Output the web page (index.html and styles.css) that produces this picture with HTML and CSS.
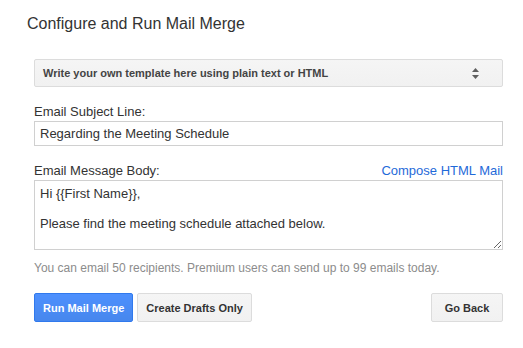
FILE: index.html
```html
<!DOCTYPE html>
<html lang="en">
<head>
  <meta charset="UTF-8">
  <title>Configure and Run Mail Merge</title>
  <link rel="stylesheet" href="styles.css">
</head>
<body>

  <h1 class="titulo">Configure and Run Mail Merge</h1>

  <div class="formulario">
    <div class="selector">
      <span>Write your own template here using plain text or HTML</span>
      <span class="flechas">
        <svg width="7" height="11" viewBox="0 0 7 11">
          <path d="M3.5 0 L7 4 L0 4 Z M0 7 L7 7 L3.5 11 Z" fill="#5f5f5f"/>
        </svg>
      </span>
    </div>

    <label class="etiqueta">Email Subject Line:</label>
    <input class="campo" type="text" value="Regarding the Meeting Schedule">

    <div class="etiqueta fila">
      <label>Email Message Body:</label>
      <a href="#" class="enlace">Compose HTML Mail</a>
    </div>
    <textarea class="cuerpo">Hi {{First Name}},

Please find the meeting schedule attached below.</textarea>

    <p class="nota">You can email 50 recipients. Premium users can send up to 99 emails today.</p>

    <div class="botones">
      <button class="azul">Run Mail Merge</button>
      <button>Create Drafts Only</button>
      <button class="volver">Go Back</button>
    </div>
  </div>

</body>
</html>
```

FILE: styles.css
```css
body {
  margin: 0;
  background: white;
  color: #333;
  font-family: 'Liberation Sans', Arial, sans-serif;
}

.titulo {
  margin: 0;
  padding: 14px 0 0 27px;
  font-size: 16px;
  line-height: 20px;
  font-weight: normal;
  color: #333;
}

.formulario {
  padding: 0 20px 0 34px;
}

.selector {
  margin-top: 25px;
  height: 28px;
  box-sizing: border-box;
  border: 1px solid #dcdcdc;
  border-radius: 2px;
  background: linear-gradient(#f5f5f5, #f1f1f1);
  display: flex;
  align-items: center;
  justify-content: space-between;
  padding: 0 23px 0 8px;
  font-size: 11px;
  font-weight: bold;
  color: #444;
}

.flechas {
  display: flex;
}

.etiqueta {
  display: block;
  margin-top: 17px;
  margin-bottom: 1px;
  font-size: 13px;
  line-height: 16px;
  color: #333;
}

.fila {
  display: flex;
  justify-content: space-between;
}

.enlace {
  color: #1f6ad9;
  text-decoration: none;
}

.campo {
  display: block;
  width: 100%;
  height: 25px;
  box-sizing: border-box;
  margin: 0;
  border: 1px solid #d0d0d0;
  padding: 0 5px;
  font-family: 'Liberation Sans', Arial, sans-serif;
  font-size: 13px;
  color: #333;
  outline: none;
}

.cuerpo {
  display: block;
  width: 100%;
  height: 70px;
  box-sizing: border-box;
  margin: 0;
  border: 1px solid #d0d0d0;
  padding: 5px 5px 3px;
  font-family: 'Liberation Sans', Arial, sans-serif;
  font-size: 13px;
  line-height: 15px;
  color: #333;
  outline: none;
  resize: vertical;
}

.nota {
  margin: 10px 0 0;
  font-size: 12px;
  line-height: 16px;
  color: #8c8c8c;
}

.botones {
  margin-top: 17px;
  display: flex;
  gap: 4px;
}

button {
  height: 29px;
  min-width: 72px;
  box-sizing: border-box;
  padding: 0 8px;
  border: 1px solid #dcdcdc;
  border-radius: 2px;
  background: linear-gradient(#f5f5f5, #f1f1f1);
  color: #333;
  font-family: 'Liberation Sans', Arial, sans-serif;
  font-size: 11px;
  font-weight: bold;
  cursor: pointer;
}

button.azul {
  background: linear-gradient(#4d90fe, #4787ed);
  border-color: #3079ed;
  color: white;
}

button.volver {
  margin-left: auto;
}
```
